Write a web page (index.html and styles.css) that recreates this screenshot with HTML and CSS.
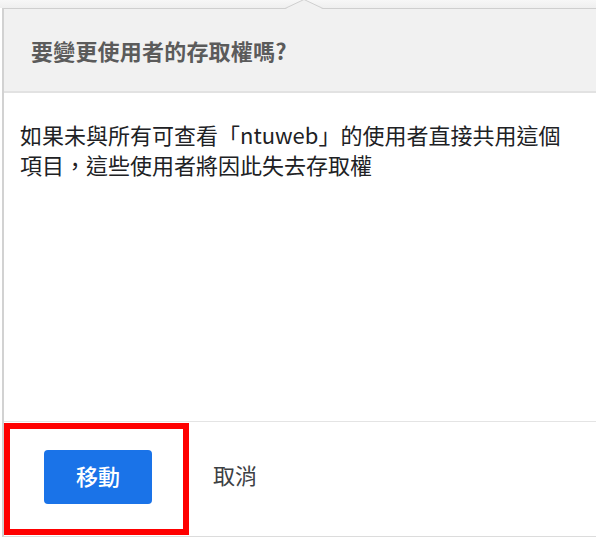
FILE: index.html
```html
<!DOCTYPE html>
<html lang="zh-Hant">
<head>
    <meta charset="UTF-8">
    <meta name="viewport" content="width=device-width, initial-scale=1.0">
    <title>要變更使用者的存取權嗎?</title>
    <link rel="stylesheet" href="styles.css">
</head>
<body>
    <div class="top-strip"></div>

    <div class="dialog">
        <div class="dialog-header">
            <svg class="notch" width="38" height="10" viewBox="0 0 38 10">
                <polygon points="0,10 19,1 38,10" fill="#f1f1f1"/>
                <polyline points="0,9.5 19,0.5 38,9.5" fill="none" stroke="#cfcfcf" stroke-width="1"/>
            </svg>
            <h1>要變更使用者的存取權嗎?</h1>
        </div>

        <div class="dialog-body">
            <p>如果未與所有可查看「ntuweb」的使用者直接共用這個項目，這些使用者將因此失去存取權</p>
        </div>

        <div class="dialog-footer">
            <div class="highlight">
                <button class="btn-primary">移動</button>
            </div>
            <button class="btn-text">取消</button>
        </div>
    </div>
</body>
</html>
```

FILE: styles.css
```css
* {
    margin: 0;
    padding: 0;
    box-sizing: border-box;
}

body {
    font-family: "Noto Sans CJK TC", "Noto Sans", sans-serif;
    background: #fff;
    width: 599px;
    height: 537px;
    overflow: hidden;
}

.top-strip {
    width: 596px;
    height: 8px;
    background: linear-gradient(#f7f7f7, #efefef);
}

.dialog {
    margin-left: 2px;
    width: 594px;
    border-top: 1px solid #cfcfcf;
    border-left: 2px solid #d2d2d2;
    border-bottom: 1px solid #dcdcdc;
}

.dialog-header {
    position: relative;
    height: 84px;
    background: #f1f1f1;
    border-bottom: 2px solid #e2e2e2;
    display: flex;
    align-items: center;
    padding-left: 27px;
}

.notch {
    position: absolute;
    top: -10px;
    left: 281px;
}

.dialog-header h1 {
    font-size: 22px;
    font-weight: 700;
    color: #5b5b5b;
    letter-spacing: 0.2px;
}

.dialog-body {
    height: 329px;
    padding: 26px 16px 0 16px;
    border-bottom: 1px solid #e4e4e4;
}

.dialog-body p {
    font-size: 22px;
    line-height: 30px;
    color: #202124;
}

.dialog-footer {
    height: 114px;
    display: flex;
    align-items: center;
}

.highlight {
    align-self: flex-start;
    margin-top: 1px;
    width: 185px;
    height: 112px;
    border: 6px solid #ff0000;
    display: flex;
    align-items: center;
    padding-left: 34px;
    padding-bottom: 5px;
}

.btn-primary {
    width: 108px;
    height: 54px;
    border: none;
    border-radius: 4px;
    background: #1a73e8;
    color: #fff;
    font-family: inherit;
    font-size: 22px;
    font-weight: 500;
    padding-bottom: 3px;
}

.btn-text {
    margin-left: 24px;
    margin-bottom: 10px;
    border: none;
    background: none;
    color: #3c4043;
    font-family: inherit;
    font-size: 22px;
}
```
